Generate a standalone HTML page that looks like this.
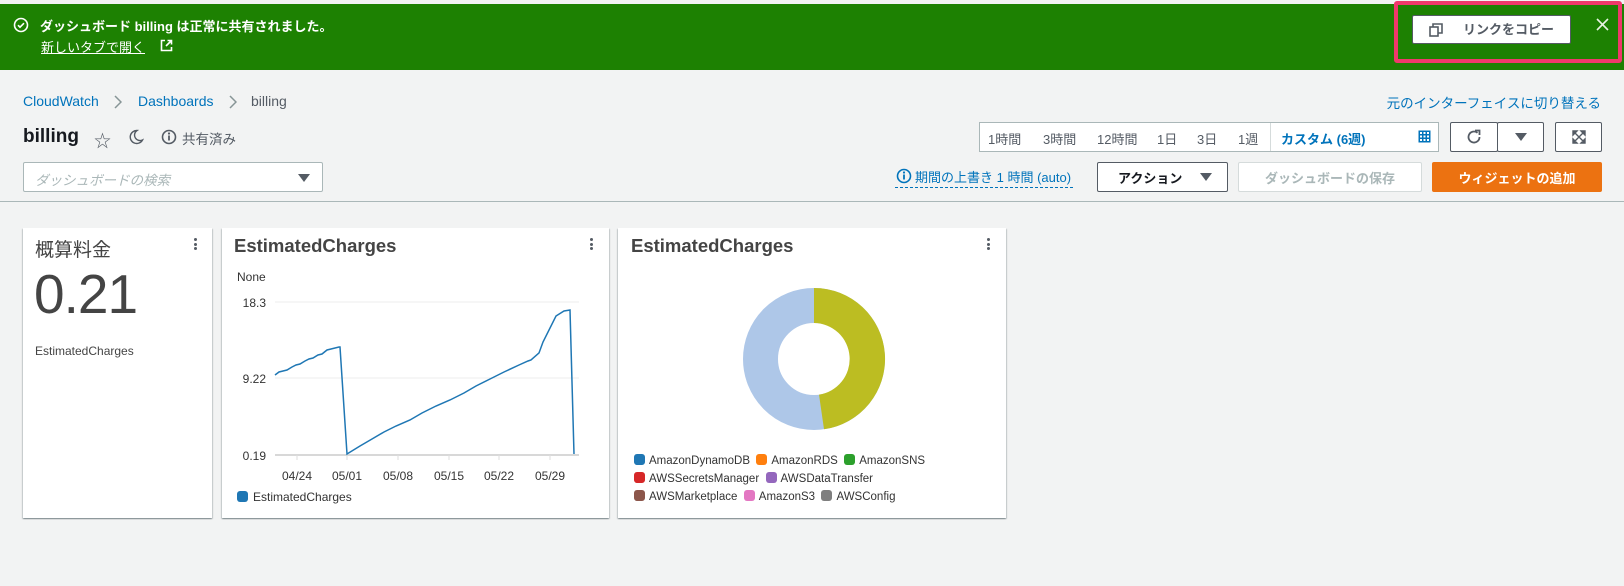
<!DOCTYPE html>
<html><head><meta charset="utf-8"><style>
*{box-sizing:border-box;margin:0;padding:0}
body{width:1624px;height:586px;background:#f2f3f3;font-family:"Liberation Sans","Noto Sans CJK JP",sans-serif;color:#16191f;position:relative;overflow:hidden;font-size:13px}
.a{position:absolute;white-space:nowrap}
.btn{position:absolute;border:1px solid #545b64;background:#fff;border-radius:2px;display:flex;align-items:center;justify-content:center;font-weight:bold;color:#545b64;font-size:13px}
.card{position:absolute;background:#fff;box-shadow:0 1px 1px rgba(0,28,36,.3),1px 1px 1px rgba(0,28,36,.15),-1px 1px 1px rgba(0,28,36,.15);top:228px;height:290px}
.dots{position:absolute;top:10px;width:3px}
.dots i{display:block;width:3px;height:3px;background:#545b64;border-radius:50%;margin-bottom:1.5px}
.lg{display:inline-block;width:11px;height:11px;border-radius:3px;vertical-align:-1px;margin-right:4px}
.leg{font-size:11.5px;color:#333;position:absolute;white-space:nowrap}
</style></head><body>
<div class="a" style="left:0;top:4px;width:1624px;height:66px;background:#1d8102"></div>
<svg class="a" style="left:13px;top:17px" width="16" height="16" viewBox="0 0 16 16"><circle cx="8" cy="8" r="6.5" fill="none" stroke="#fff" stroke-width="1.6"/><path d="M5 8.2l2 2 4-4" fill="none" stroke="#fff" stroke-width="1.6"/></svg>
<div class="a" style="left:40px;top:16px;color:#fff;font-weight:bold;font-size:13px">ダッシュボード billing は正常に共有されました。</div>
<div class="a" style="left:41px;top:37px;color:#fff;font-size:13px;text-decoration:underline">新しいタブで開く</div>
<svg class="a" style="left:160px;top:39px" width="13" height="13" viewBox="0 0 13 13"><path d="M5 1.5H1.5v10h10V8M7.5 1.5h4v4M11.5 1.5L6 7" fill="none" stroke="#fff" stroke-width="1.6"/></svg>
<div class="a" style="left:1394px;top:1px;width:228px;height:62px;border:4px solid #f0386b;border-radius:3px"></div>
<div class="a" style="left:1412px;top:15px;width:159px;height:29px;background:#fff;border:1px solid #545b64;border-radius:2px;color:#545b64;font-weight:bold;font-size:13px;line-height:27px;padding-left:50px">リンクをコピー</div>
<svg class="a" style="left:1429px;top:23px" width="14" height="14" viewBox="0 0 14 14"><rect x="1" y="4" width="8" height="9" fill="none" stroke="#545b64" stroke-width="1.6"/><path d="M4 4V1h9v9h-4" fill="none" stroke="#545b64" stroke-width="1.6"/></svg>
<svg class="a" style="left:1596px;top:18px" width="13" height="13" viewBox="0 0 13 13"><path d="M1 1l11 11M12 1L1 12" stroke="#e8f3e3" stroke-width="1.6"/></svg>

<div class="a" style="left:23px;top:93px;color:#0073bb;font-size:14px">CloudWatch</div>
<svg class="a" style="left:114px;top:95px" width="8" height="14" viewBox="0 0 8 14"><path d="M1 1l6 6-6 6" fill="none" stroke="#879596" stroke-width="1.5"/></svg>
<div class="a" style="left:138px;top:93px;color:#0073bb;font-size:14px">Dashboards</div>
<svg class="a" style="left:229px;top:95px" width="8" height="14" viewBox="0 0 8 14"><path d="M1 1l6 6-6 6" fill="none" stroke="#879596" stroke-width="1.5"/></svg>
<div class="a" style="left:251px;top:93px;color:#545b64;font-size:14px">billing</div>
<div class="a" style="right:23px;top:92px;color:#0073bb;font-size:13.5px">元のインターフェイスに切り替える</div>

<div class="a" style="left:23px;top:126px;font-size:19px;font-weight:bold">billing</div>
<div class="a" style="left:94px;top:127px;font-size:17px;color:#545b64">☆</div>
<svg class="a" style="left:128px;top:129px" width="16" height="16" viewBox="0 0 16 16"><path d="M9 1.5A6.5 6.5 0 1 0 14.5 11 5.5 5.5 0 0 1 9 1.5z" fill="none" stroke="#545b64" stroke-width="1.4"/></svg>
<svg class="a" style="left:161px;top:129px" width="16" height="16" viewBox="0 0 16 16"><circle cx="8" cy="8" r="6.5" fill="none" stroke="#545b64" stroke-width="1.6"/><rect x="7.1" y="6.5" width="1.8" height="5" fill="#545b64"/><circle cx="8" cy="4.5" r="1.1" fill="#545b64"/></svg>
<div class="a" style="left:182px;top:128px;font-size:13.5px;color:#545b64">共有済み</div>

<div class="a" style="left:23px;top:162px;width:300px;height:30px;background:#fff;border:1px solid #aab7b8;border-radius:2px;color:#aab7b8;font-style:italic;font-size:13.5px;padding:6px 11px">ダッシュボードの検索</div>
<div class="a" style="left:298px;top:174px;border-left:6px solid transparent;border-right:6px solid transparent;border-top:8px solid #545b64"></div>

<div class="a" style="left:979px;top:122px;width:460px;height:30px;background:#fff;border:1px solid #aab7b8;font-size:13px;color:#545b64"></div>
<div class="a" style="left:988px;top:129px;font-size:13px;color:#545b64">1時間</div>
<div class="a" style="left:1043px;top:129px;font-size:13px;color:#545b64">3時間</div>
<div class="a" style="left:1097px;top:129px;font-size:13px;color:#545b64">12時間</div>
<div class="a" style="left:1157px;top:129px;font-size:13px;color:#545b64">1日</div>
<div class="a" style="left:1197px;top:129px;font-size:13px;color:#545b64">3日</div>
<div class="a" style="left:1238px;top:129px;font-size:13px;color:#545b64">1週</div>
<div class="a" style="left:1270px;top:123px;width:1px;height:28px;background:#d5dbdb"></div>
<div class="a" style="left:1281px;top:129px;font-size:13px;color:#0073bb;font-weight:bold">カスタム (6週)</div>
<svg class="a" style="left:1418px;top:130px" width="13" height="13" viewBox="0 0 13 13"><rect x="0.5" y="0.5" width="12" height="12" fill="#0073bb"/><g fill="#fff"><rect x="2" y="2" width="2" height="2"/><rect x="5.5" y="2" width="2" height="2"/><rect x="9" y="2" width="2" height="2"/><rect x="2" y="5.5" width="2" height="2"/><rect x="5.5" y="5.5" width="2" height="2"/><rect x="9" y="5.5" width="2" height="2"/><rect x="2" y="9" width="2" height="2"/><rect x="5.5" y="9" width="2" height="2"/><rect x="9" y="9" width="2" height="2"/></g></svg>

<div class="btn" style="left:1450px;top:122px;width:48px;height:30px"><svg width="16" height="16" viewBox="0 0 16 16"><path d="M13.5 8A5.5 5.5 0 1 1 11.5 3.8" fill="none" stroke="#545b64" stroke-width="1.8"/><path d="M9 1.5h4.5V6" fill="none" stroke="#545b64" stroke-width="1.8"/></svg></div>
<div class="btn" style="left:1497px;top:122px;width:47px;height:30px"><div style="border-left:6px solid transparent;border-right:6px solid transparent;border-top:8px solid #545b64"></div></div>
<div class="btn" style="left:1555px;top:122px;width:47px;height:30px"><svg width="14" height="14" viewBox="0 0 14 14"><path d="M1 1h4L1 5zM13 1v4L9 1zM1 13V9l4 4zM13 13H9l4-4zM2 2l10 10M12 2L2 12" fill="#545b64" stroke="#545b64" stroke-width="1.4"/></svg></div>

<svg class="a" style="left:896px;top:168px" width="16" height="16" viewBox="0 0 16 16"><circle cx="8" cy="8" r="6.5" fill="none" stroke="#0073bb" stroke-width="1.6"/><rect x="7.1" y="6.5" width="1.8" height="5" fill="#0073bb"/><circle cx="8" cy="4.5" r="1.1" fill="#0073bb"/></svg>
<div class="a" style="left:915px;top:167px;color:#0073bb;font-size:13px">期間の上書き 1 時間 (auto)</div>
<div class="a" style="left:895px;top:187px;width:178px;border-top:1px dashed #0073bb"></div>
<div class="btn" style="left:1097px;top:162px;width:131px;height:30px;color:#16191f;justify-content:flex-start;padding-left:20px">アクション<span style="margin-left:18px;border-left:6px solid transparent;border-right:6px solid transparent;border-top:8px solid #545b64"></span></div>
<div class="btn" style="left:1238px;top:162px;width:184px;height:30px;border-color:#d5dbdb;color:#aab7b8">ダッシュボードの保存</div>
<div class="btn" style="left:1432px;top:162px;width:170px;height:30px;border-color:#ec7211;background:#ec7211;color:#fff">ウィジェットの追加</div>

<div class="a" style="left:0;top:201px;width:1624px;height:1px;background:#aab7b8"></div>

<div class="card" style="left:23px;width:189px">
<div class="a" style="left:12px;top:7px;font-size:19px;color:#444">概算料金</div>
<div class="dots" style="left:171px"><i></i><i></i><i></i></div>
<div class="a" style="left:11px;top:34px;font-size:55px;color:#444;letter-spacing:-1px">0.21</div>
<div class="a" style="left:12px;top:116px;font-size:12px;color:#444">EstimatedCharges</div>
</div>

<div class="card" style="left:222px;width:387px">
<div class="a" style="left:12px;top:7px;font-size:18.5px;font-weight:bold;color:#444">EstimatedCharges</div>
<div class="dots" style="left:368px"><i></i><i></i><i></i></div>
</div>
<svg class="a" style="left:222px;top:228px" width="387" height="290" viewBox="222 228 387 290" font-family="Liberation Sans, sans-serif" font-size="12" fill="#333">
<text x="237" y="281">None</text>
<line x1="275" y1="302" x2="579" y2="302" stroke="#eee"/>
<line x1="275" y1="378" x2="579" y2="378" stroke="#eee"/>
<line x1="275" y1="455" x2="579" y2="455" stroke="#ccc" stroke-width="1.5"/>
<text x="266" y="307" text-anchor="end">18.3</text>
<text x="266" y="383" text-anchor="end">9.22</text>
<text x="266" y="460" text-anchor="end">0.19</text>
<g stroke="#ddd"><line x1="297" y1="455" x2="297" y2="460"/><line x1="347" y1="455" x2="347" y2="460"/><line x1="398" y1="455" x2="398" y2="460"/><line x1="449" y1="455" x2="449" y2="460"/><line x1="499" y1="455" x2="499" y2="460"/><line x1="550" y1="455" x2="550" y2="460"/></g>
<g text-anchor="middle"><text x="297" y="480">04/24</text><text x="347" y="480">05/01</text><text x="398" y="480">05/08</text><text x="449" y="480">05/15</text><text x="499" y="480">05/22</text><text x="550" y="480">05/29</text></g>
<polyline fill="none" stroke="#1f77b4" stroke-width="1.5" points="275,375 279,372 283,371 287,370 292,367 296,365 300,364 305,361 309,359 313,358 318,355 322,354 327,350 331,349 339,347 340,347 347,454 360,446 372,439 384,432 396,426 410,420 422,413 436,406 450,400 464,393 476,386 490,379 504,372 519,365 528,361 531,360 539,353 543,342 556,316 564,311 570,310 574,454"/>
<rect x="237" y="491" width="11" height="11" rx="3" fill="#1f77b4"/>
<text x="253" y="501">EstimatedCharges</text>
</svg>

<div class="card" style="left:618px;width:388px">
<div class="a" style="left:13px;top:7px;font-size:18.5px;font-weight:bold;color:#444">EstimatedCharges</div>
<div class="dots" style="left:369px"><i></i><i></i><i></i></div>
</div>
<svg class="a" style="left:742px;top:287px" width="144" height="144" viewBox="-72 -72 144 144">
<circle cx="0" cy="0" r="53.5" fill="none" stroke="#aec7e8" stroke-width="35"/>
<path d="M0 -71A71 71 0 0 1 10 70.3L5 35.6A36 36 0 0 0 0 -36z" fill="#bcbd22"/>
</svg>
<div class="leg" style="left:634px;top:454px"><span class="lg" style="background:#1f77b4"></span>AmazonDynamoDB &nbsp;<span class="lg" style="background:#ff7f0e"></span>AmazonRDS &nbsp;<span class="lg" style="background:#2ca02c"></span>AmazonSNS</div>
<div class="leg" style="left:634px;top:472px"><span class="lg" style="background:#d62728"></span>AWSSecretsManager &nbsp;<span class="lg" style="background:#9467bd"></span>AWSDataTransfer</div>
<div class="leg" style="left:634px;top:490px"><span class="lg" style="background:#8c564b"></span>AWSMarketplace &nbsp;<span class="lg" style="background:#e377c2"></span>AmazonS3 &nbsp;<span class="lg" style="background:#7f7f7f"></span>AWSConfig</div>
</body></html>
